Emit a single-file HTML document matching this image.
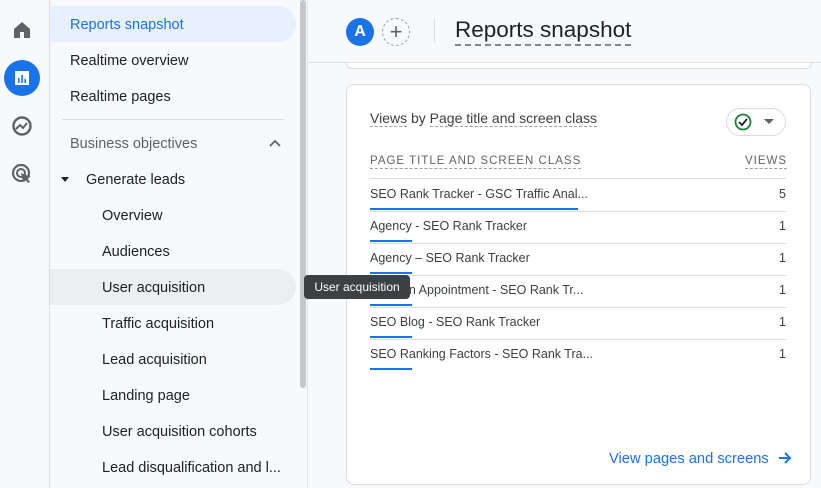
<!DOCTYPE html><html><head><style>
body{margin:0;width:821px;height:488px;overflow:hidden;background:#f8f9fa;font-family:"Liberation Sans",sans-serif;position:relative;color:#202124}
.a{position:absolute}
.nav{font-size:14.5px;color:#202124}
.row{position:absolute;left:370px;width:416px;height:32px;border-bottom:1px solid #dadce0;font-size:12.5px;color:#3c4043}
.row span{position:absolute;top:8px}
.row .v{right:0}
.row .b{position:absolute;left:0;top:29px;height:2px;background:#1a73e8;width:42px}
</style></head><body>
<div class="a" style="left:49px;top:0;width:1px;height:488px;background:#dadce0"></div>
<svg class="a" style="left:12px;top:20px" width="20" height="20" viewBox="0 0 20 20"><path d="M2 9L10 2L18 9V18H12V12H8V18H2Z" fill="#5f6368"/></svg>
<div class="a" style="left:4px;top:60px;width:36px;height:36px;border-radius:50%;background:#1a73e8"></div>
<svg class="a" style="left:14px;top:70px" width="16" height="16"><rect x="1" y="1" width="14" height="14" fill="#fff"/><rect x="4" y="8" width="1.6" height="5" fill="#1a73e8"/><rect x="7.2" y="5" width="1.6" height="8" fill="#1a73e8"/><rect x="10.4" y="9" width="1.6" height="4" fill="#1a73e8"/></svg>
<svg class="a" style="left:11px;top:115px" width="22" height="22"><circle cx="11" cy="11" r="8.5" fill="none" stroke="#5f6368" stroke-width="2.4"/><path d="M5 14L9 10L12 13L16 8" fill="none" stroke="#5f6368" stroke-width="2"/></svg>
<svg class="a" style="left:11px;top:163px" width="22" height="22"><circle cx="10" cy="10" r="8" fill="none" stroke="#5f6368" stroke-width="2.2"/><circle cx="10" cy="10" r="4" fill="none" stroke="#5f6368" stroke-width="2"/><path d="M10 10L20 14L16 15L19 19L17 20L14 16L12 19Z" fill="#5f6368"/></svg>
<div class="a" style="left:50px;top:6px;width:246px;height:36px;background:#e8f0fe;border-radius:0 18px 18px 0"></div>
<div class="a nav" style="left:70px;top:17px;color:#1a73e8">Reports snapshot</div>
<div class="a nav" style="left:70px;top:53px">Realtime overview</div>
<div class="a nav" style="left:70px;top:89px">Realtime pages</div>
<div class="a" style="left:62px;top:119px;width:222px;height:1px;background:#dadce0"></div>
<div class="a nav" style="left:70px;top:136px;color:#5f6368">Business objectives</div>
<svg class="a" style="left:269px;top:139px" width="12" height="10"><path d="M1 7L6 2L11 7" fill="none" stroke="#5f6368" stroke-width="1.8"/></svg>
<svg class="a" style="left:61px;top:177px" width="8" height="6"><path d="M0 0H8L4 5Z" fill="#202124"/></svg>
<div class="a nav" style="left:86px;top:172px">Generate leads</div>
<div class="a" style="left:50px;top:269px;width:246px;height:36px;background:#eceef0;border-radius:0 18px 18px 0"></div>
<div class="a nav" style="left:102px;top:208px">Overview</div>
<div class="a nav" style="left:102px;top:244px">Audiences</div>
<div class="a nav" style="left:102px;top:280px">User acquisition</div>
<div class="a nav" style="left:102px;top:316px">Traffic acquisition</div>
<div class="a nav" style="left:102px;top:352px">Lead acquisition</div>
<div class="a nav" style="left:102px;top:388px">Landing page</div>
<div class="a nav" style="left:102px;top:424px">User acquisition cohorts</div>
<div class="a nav" style="left:102px;top:460px;white-space:nowrap;width:196px;overflow:hidden">Lead disqualification and l...</div>
<div class="a" style="left:300px;top:0;width:6px;height:388px;background:#c4c7c9;border-radius:3px"></div>
<div class="a" style="left:307px;top:0;width:1px;height:488px;background:#e3e3e3"></div>
<div class="a" style="left:346px;top:18px;width:28px;height:28px;border-radius:50%;background:#1a73e8;color:#fff;font-weight:bold;font-size:16px;text-align:center;line-height:28px">A</div>
<div class="a" style="left:382px;top:18px;width:26px;height:26px;border-radius:50%;border:1px dashed #9aa0a6;color:#5f6368;font-size:22px;text-align:center;line-height:25px">+</div>
<div class="a" style="left:434px;top:18px;width:1px;height:24px;background:#dadce0"></div>
<div class="a" style="left:455px;top:17px;font-size:22.5px;color:#202124;border-bottom:2px dashed #80868b;padding-bottom:1px">Reports snapshot</div>
<div class="a" style="left:308px;top:62px;width:513px;height:1px;background:#e0e0e0"></div>
<div class="a" style="left:346px;top:63px;width:464px;height:5px;background:#fff;border:1px solid #dadce0;border-top:none;border-radius:0 0 8px 8px"></div>
<div class="a" style="left:346px;top:84px;width:463px;height:399px;background:#fff;border:1px solid #dadce0;border-radius:8px"></div>
<div class="a" style="left:370px;top:110px;font-size:14px;color:#3c4043"><span style="border-bottom:1px dashed #9aa0a6">Views</span> by <span style="border-bottom:1px dashed #9aa0a6">Page title and screen class</span></div>
<div class="a" style="left:726px;top:108px;width:58px;height:26px;border:1px solid #dadce0;border-radius:14px"></div>
<svg class="a" style="left:734px;top:113px" width="18" height="18"><circle cx="9" cy="9" r="7.5" fill="none" stroke="#188038" stroke-width="1.8"/><path d="M5 9L8 12L13 6" fill="none" stroke="#202124" stroke-width="1.8"/></svg>
<svg class="a" style="left:764px;top:119px" width="10" height="6"><path d="M0 0H10L5 5Z" fill="#5f6368"/></svg>
<div class="a" style="left:370px;top:155px;font-size:11.5px;letter-spacing:1px;color:#5f6368;border-bottom:1px dashed #9aa0a6;padding-bottom:1px">PAGE TITLE AND SCREEN CLASS</div>
<div class="a" style="left:745px;top:155px;font-size:11.5px;letter-spacing:1px;color:#5f6368;border-bottom:1px dashed #9aa0a6;padding-bottom:1px">VIEWS</div>
<div class="a" style="left:370px;top:178px;width:416px;height:1px;background:#dadce0"></div>
<div class="row" style="top:179px"><span>SEO Rank Tracker - GSC Traffic Anal...</span><span class="v">5</span><div class="b" style="width:208px"></div></div>
<div class="row" style="top:211px"><span>Agency - SEO Rank Tracker</span><span class="v">1</span><div class="b"></div></div>
<div class="row" style="top:243px"><span>Agency – SEO Rank Tracker</span><span class="v">1</span><div class="b"></div></div>
<div class="row" style="top:275px"><span>Book an Appointment - SEO Rank Tr...</span><span class="v">1</span><div class="b"></div></div>
<div class="row" style="top:307px"><span>SEO Blog - SEO Rank Tracker</span><span class="v">1</span><div class="b"></div></div>
<div class="row" style="top:339px;border-bottom:none"><span>SEO Ranking Factors - SEO Rank Tra...</span><span class="v">1</span><div class="b"></div></div>
<div class="a" style="left:609px;top:451px;font-size:14.7px;color:#1a73e8">View pages and screens</div>
<svg class="a" style="left:778px;top:451px" width="14" height="14"><path d="M1 7H12M7 2L12 7L7 12" fill="none" stroke="#1a73e8" stroke-width="2"/></svg>
<div class="a" style="left:304px;top:275px;width:106px;height:24px;background:#3c4043;border-radius:4px;color:#fff;font-size:12px;line-height:24px;text-align:center">User acquisition</div>
</body></html>
